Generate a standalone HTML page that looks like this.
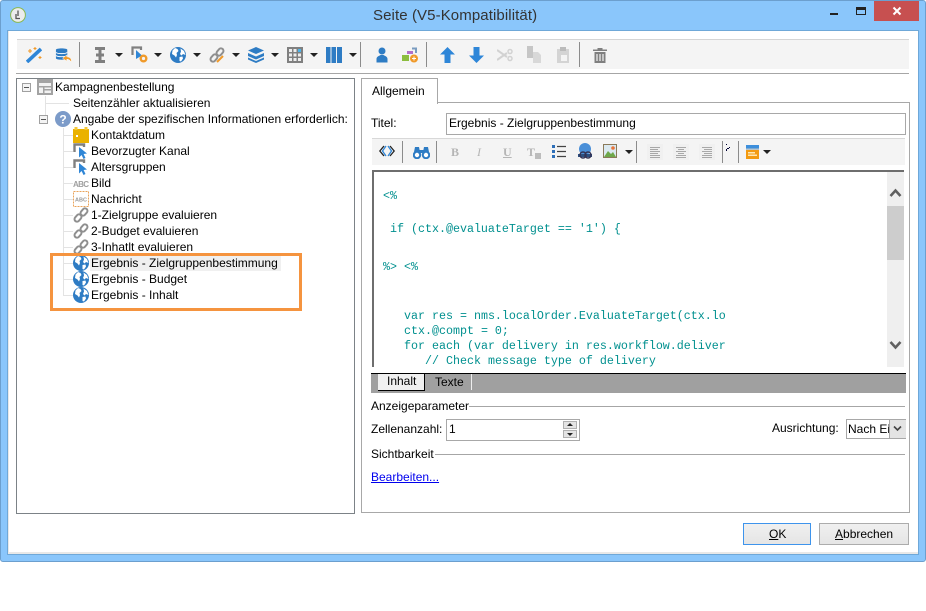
<!DOCTYPE html>
<html lang="de"><head><meta charset="utf-8"><title>Seite (V5-Kompatibilität)</title>
<style>
html,body{margin:0;padding:0;background:#fff}
body{width:926px;height:611px;position:relative;overflow:hidden;font-family:"Liberation Sans",sans-serif;font-size:12px;color:#000}
div,svg,span.a{position:absolute}
.t{position:absolute;white-space:nowrap;line-height:16px;height:16px}
.c{position:absolute;white-space:pre;font-family:"Liberation Mono",monospace;font-size:11.67px;line-height:14px;color:#00908f}
.sep{position:absolute;width:1px;background:#8c8c8c}
.arr{position:absolute;width:0;height:0;border-left:4px solid transparent;border-right:4px solid transparent;border-top:4px solid #222}
.tl{position:absolute;background:#e3e3e3}
.bx{position:absolute;width:7px;height:7px;border:1px solid #a0a0a0;background:#f4f4f4}
.bx:after{content:"";position:absolute;left:1px;top:3px;width:5px;height:1px;background:#555}
.al{position:absolute;width:16px;height:16px;background:#f0f0f0}
.al i{position:absolute;height:1px;background:#a8a8a8}
</style></head><body>
<svg width="0" height="0" style="position:absolute"><defs>
<symbol id="globe" viewBox="0 0 16 16"><circle cx="8" cy="8" r="8" fill="#2e7cc4"/><path d="M5 1 7.500 2 8.500 4 6.500 6 7 8 6 10.500 4.500 8.500 2 7 2.500 3.500ZM10.500 1.500 14 4 15.500 8 13 7 11.500 8.500 10 7 11 4.500ZM9.500 10 12.500 9.500 13 11.500 11 14.500 9.500 14Z" fill="#fff"/></symbol>
<symbol id="link" viewBox="0 0 16 16"><g fill="none" stroke="#8f8f8f" stroke-width="2"><rect x="8.500" y="1" width="5" height="8" rx="2.500" transform="rotate(40 11 5)"/><rect x="2.500" y="7" width="5" height="8" rx="2.500" transform="rotate(40 5 11)"/></g></symbol>
<symbol id="cur" viewBox="0 0 16 16"><path d="M1.500 9V1.500H11V4" fill="none" stroke="#808080" stroke-width="2.400"/><path d="M6 4 14 10.500 10.600 11 12.500 15 10.500 16 8.600 12 6 14.500Z" fill="#2f86d6"/></symbol>
</defs></svg>

<!-- window frame -->
<div style="left:0;top:0;width:924px;height:560px;background:#8ac6fb;border:1px solid #6c9fce;border-radius:3px"></div>
<div style="left:8px;top:31px;width:909px;height:521px;background:#fff;border-left:1px solid #e8e8e8;border-bottom:2px solid #e8e8e8;outline:1px solid #6fa8d8"></div>
<!-- title bar -->
<svg style="left:10px;top:7px" width="16" height="16" viewBox="0 0 16 16"><circle cx="8" cy="8" r="7.400" fill="#ececec" stroke="#8ab850"/><path d="M8 3.500V9M6 7v4.500h4" fill="none" stroke="#555" stroke-width="1.300"/></svg>
<div class="t" style="left:373px;top:7px;font-size:15px;color:#333;line-height:18px;height:18px;letter-spacing:.1px">Seite (V5-Kompatibilität)</div>
<div style="left:830px;top:13px;width:8px;height:2px;background:#222"></div>
<div style="left:856px;top:7px;width:8px;height:4px;border:1px solid #222;border-top:3px solid #222"></div>
<div style="left:874px;top:1px;width:45px;height:20px;background:#c75050"></div>
<svg style="left:892px;top:6px" width="10" height="10" viewBox="0 0 10 10"><path d="M1.500 1.500 8.500 8.500M8.500 1.500 1.500 8.500" stroke="#fff" stroke-width="2"/></svg>

<!-- main toolbar -->
<div style="left:17px;top:39px;width:892px;height:29px;background:#f4f4f4;border-top:1px solid #d5d5d5"></div>
<div style="left:16px;top:73px;width:893px;height:1px;background:#a6a6a6"></div>
<div class="sep" style="left:79px;top:42px;height:25px"></div>
<div class="sep" style="left:360px;top:42px;height:25px"></div>
<div class="sep" style="left:426px;top:42px;height:25px"></div>
<div class="sep" style="left:579px;top:42px;height:25px"></div>
<svg style="left:26px;top:47px" width="16" height="16" viewBox="0 0 16 16"><path d="M1 15 15 2" stroke="#2e86d8" stroke-width="3.600"/><path d="M4 2v4M2 4h4M14 9v3M12.500 10.500h3M9 0v3M7.500 1.500h3" stroke="#f09a2a" stroke-width="1.100"/></svg>
<svg style="left:55px;top:47px" width="17" height="16" viewBox="0 0 18 16"><path d="M1 2.500C1 .5 13 .5 13 2.500V11.500C13 13.500 1 13.500 1 11.500Z" fill="#2e7cc4"/><path d="M1 5.300C3 7 11 7 13 5.300M1 8.500C3 10.200 11 10.200 13 8.500" stroke="#fff" fill="none"/><path d="M17.500 15.500C17.500 11.500 15.500 10 12.500 10V8L8 11.500 12.500 14.500V12.500C14.500 12.500 16 13.500 17.500 15.500Z" fill="#f09a2a" stroke="#fff" stroke-width=".5"/></svg>
<svg style="left:92px;top:47px" width="16" height="16" viewBox="0 0 16 16"><path d="M3 1.500H13M3 14.500H13M8 1.500V14.500M4 8H12" stroke="#7f7f7f" stroke-width="3" fill="none"/></svg>
<div class="arr" style="left:115px;top:53px"></div>
<svg style="left:131px;top:46px" width="17" height="17" viewBox="0 0 17 17"><path d="M1.500 9V1.500H10V4" fill="none" stroke="#808080" stroke-width="2.200"/><path d="M5 4 11 9.500 5 13Z" fill="#2f86d6"/><circle cx="12.500" cy="12.500" r="2.800" fill="none" stroke="#f09a2a" stroke-width="2.400"/></svg>
<div class="arr" style="left:154px;top:53px"></div>
<svg style="left:170px;top:47px" width="16" height="16"><use href="#globe"/></svg>
<div class="arr" style="left:193px;top:53px"></div>
<svg style="left:209px;top:47px" width="16" height="16"><use href="#link"/><path d="M8 15 14 9" stroke="#f09a2a" stroke-width="2"/></svg>
<div class="arr" style="left:232px;top:53px"></div>
<svg style="left:248px;top:47px" width="16" height="16" viewBox="0 0 16 16"><path d="M8 0 16 3.500 8 7 0 3.500Z" fill="#2e7cc4"/><path d="M0 6 8 9.500 16 6V9L8 12.500 0 9ZM0 10.500 8 14 16 10.500V12.500L8 16 0 12.500Z" fill="#2e7cc4"/></svg>
<div class="arr" style="left:271px;top:53px"></div>
<svg style="left:287px;top:47px" width="16" height="16" viewBox="0 0 16 16"><rect width="16" height="16" fill="#808080"/><path d="M2 2h3v3H2zM6.500 2h3v3h-3zM2 6.500h3v3H2zM6.500 6.500h3v3h-3zM11 6.500h3v3h-3zM2 11h3v3H2zM6.500 11h3v3h-3zM11 11h3v3h-3z" fill="#eee"/><path d="M11 2h3v3h-3z" fill="#4cb4ea"/></svg>
<div class="arr" style="left:310px;top:53px"></div>
<svg style="left:326px;top:47px" width="16" height="16" viewBox="0 0 16 16"><path d="M0 0h4.500v16H0zM5.500 0H10v16H5.500zM11 0h5v16h-5z" fill="#2e7cc4"/></svg>
<div class="arr" style="left:349px;top:53px"></div>
<svg style="left:375px;top:47px" width="14" height="16" viewBox="0 0 14 16"><circle cx="7" cy="4" r="3.500" fill="#2e7cc4"/><path d="M1.500 15.500V12C1.500 9.500 4 9 5.500 8H8.500C10 9 12.500 9.500 12.500 12V15.500Z" fill="#2e7cc4"/></svg>
<svg style="left:402px;top:46px" width="16" height="17" viewBox="0 0 16 17"><path d="M5 5h6v3H5z" fill="#b26fc9"/><path d="M10 2.500h4V7" fill="none" stroke="#7a9cc0" stroke-width="2"/><path d="M0 9h7v6H0z" fill="#8cbd3f"/><circle cx="12" cy="12.500" r="4" fill="#f09a2a"/><path d="M10 12.500h4M12 10.500v4" stroke="#fff"/></svg>
<svg style="left:440px;top:47px" width="15" height="16" viewBox="0 0 15 16"><path d="M7.500 0 15 7.500H10.500V16H4.500V7.500H0Z" fill="#2e86d8"/></svg>
<svg style="left:469px;top:47px" width="15" height="16" viewBox="0 0 15 16"><path d="M7.500 16 15 8.500H10.500V0H4.500V8.500H0Z" fill="#2e86d8"/></svg>
<svg style="left:497px;top:47px" width="16" height="16" viewBox="0 0 16 16"><path d="M0 3 10 10M0 13 10 6" stroke="#d2d2d2" stroke-width="2"/><circle cx="13" cy="4.500" r="2" fill="none" stroke="#d2d2d2" stroke-width="1.500"/><circle cx="13" cy="11.500" r="2" fill="none" stroke="#d2d2d2" stroke-width="1.500"/></svg>
<svg style="left:527px;top:46px" width="15" height="17" viewBox="0 0 15 17"><path d="M0 0h6v12H0z" fill="#c6c6c6"/><path d="M6 6h5l3 3v8H6z" fill="#d8d8d8"/></svg>
<svg style="left:556px;top:47px" width="14" height="16" viewBox="0 0 14 16"><path d="M1 2h12v14H1z" fill="#d4d4d4"/><path d="M4 0h6v4H4z" fill="#bbb"/><path d="M5 8h6v6H5z" fill="#f4f4f4"/></svg>
<svg style="left:593px;top:47px" width="14" height="16" viewBox="0 0 14 16"><path d="M0 2.500h14V4H0zM4.500 1h5v1.500h-5z" fill="#7f7f7f"/><path d="M1.500 5h11v11h-11z" fill="#7f7f7f"/><path d="M4 7v7M7 7v7M10 7v7" stroke="#f4f4f4" stroke-width="1.200"/></svg>

<!-- tree panel -->
<div style="left:16px;top:78px;width:337px;height:434px;border:1px solid #7c8287;background:#fff"></div>
<div class="tl" style="left:45px;top:96px;width:1px;height:23px"></div>
<div class="tl" style="left:45px;top:103px;width:24px;height:1px"></div>
<div class="tl" style="left:63px;top:128px;width:1px;height:168px"></div>
<div class="tl" style="left:63px;top:135px;width:10px;height:1px"></div>
<div class="tl" style="left:63px;top:151px;width:10px;height:1px"></div>
<div class="tl" style="left:63px;top:167px;width:10px;height:1px"></div>
<div class="tl" style="left:63px;top:183px;width:10px;height:1px"></div>
<div class="tl" style="left:63px;top:199px;width:10px;height:1px"></div>
<div class="tl" style="left:63px;top:215px;width:10px;height:1px"></div>
<div class="tl" style="left:63px;top:231px;width:10px;height:1px"></div>
<div class="tl" style="left:63px;top:247px;width:10px;height:1px"></div>
<div class="tl" style="left:63px;top:263px;width:10px;height:1px"></div>
<div class="tl" style="left:63px;top:279px;width:10px;height:1px"></div>
<div class="tl" style="left:63px;top:295px;width:10px;height:1px"></div>
<div class="bx" style="left:22px;top:83px"></div>
<div class="bx" style="left:39px;top:115px"></div>
<svg style="left:37px;top:79px" width="16" height="16" viewBox="0 0 16 16"><rect width="16" height="16" fill="#a3a3a3"/><path d="M2 4h12v3H2zM2 8.500h4V14H2zM7.500 8.500H14V10H7.500zM7.500 11.500H14V14H7.500z" fill="#f2f2f2"/></svg>
<svg style="left:55px;top:111px" width="16" height="16"><circle cx="8" cy="8" r="8" fill="#7c9bc9"/><text x="8" y="12.500" font-family="Liberation Sans" font-size="12" font-weight="bold" fill="#fff" text-anchor="middle">?</text></svg>
<svg style="left:73px;top:127px" width="16" height="16" viewBox="0 0 16 16"><path d="M0 2h16v14H0z" fill="#eab200"/><path d="M1.500 0h3v3h-3zM11.500 0h3v3h-3z" fill="#f5c93a"/><path d="M3 8h2v2H3z" fill="#fff"/></svg>
<svg style="left:73px;top:143px" width="16" height="16"><use href="#cur"/></svg>
<svg style="left:73px;top:159px" width="16" height="16"><use href="#cur"/></svg>
<svg style="left:73px;top:175px" width="17" height="16"><text x="0" y="12" font-family="Liberation Sans" font-size="8" font-weight="bold" fill="#a0a0a0" textLength="16">ABC</text></svg>
<svg style="left:73px;top:191px" width="16" height="16"><rect x=".5" y=".5" width="15" height="15" fill="#fff" stroke="#eaa35a" stroke-dasharray="2 1"/><text x="8" y="10.500" font-family="Liberation Sans" font-size="5.500" font-weight="bold" fill="#999" text-anchor="middle">ABC</text></svg>
<svg style="left:73px;top:207px" width="16" height="16"><use href="#link"/></svg>
<svg style="left:73px;top:223px" width="16" height="16"><use href="#link"/></svg>
<svg style="left:73px;top:239px" width="16" height="16"><use href="#link"/></svg>
<div style="left:90px;top:256px;width:191px;height:15px;background:#f0f0f0"></div>
<svg style="left:73px;top:255px" width="16" height="16"><use href="#globe"/></svg>
<svg style="left:73px;top:271px" width="16" height="16"><use href="#globe"/></svg>
<svg style="left:73px;top:287px" width="16" height="16"><use href="#globe"/></svg>
<span class="t" style="left:55px;top:79px">Kampagnenbestellung</span>
<span class="t" style="left:73px;top:95px">Seitenzähler aktualisieren</span>
<span class="t" style="left:73px;top:111px">Angabe der spezifischen Informationen erforderlich:</span>
<span class="t" style="left:91px;top:127px">Kontaktdatum</span>
<span class="t" style="left:91px;top:143px">Bevorzugter Kanal</span>
<span class="t" style="left:91px;top:159px">Altersgruppen</span>
<span class="t" style="left:91px;top:175px">Bild</span>
<span class="t" style="left:91px;top:191px">Nachricht</span>
<span class="t" style="left:91px;top:207px">1-Zielgruppe evaluieren</span>
<span class="t" style="left:91px;top:223px">2-Budget evaluieren</span>
<span class="t" style="left:91px;top:239px">3-Inhatlt evaluieren</span>
<span class="t" style="left:91px;top:255px">Ergebnis - Zielgruppenbestimmung</span>
<span class="t" style="left:91px;top:271px">Ergebnis - Budget</span>
<span class="t" style="left:91px;top:287px">Ergebnis - Inhalt</span>
<div style="left:50px;top:253px;width:246px;height:52px;border:3px solid #f5943f"></div>

<!-- right panel -->
<div style="left:361px;top:102px;width:547px;height:409px;border:1px solid #a8a8a8;background:#fff"></div>
<div style="left:361px;top:78px;width:75px;height:25px;border:1px solid #a8a8a8;border-bottom:0;background:#fff"></div>
<span class="t" style="left:372px;top:83px">Allgemein</span>
<span class="t" style="left:371px;top:115px">Titel:</span>
<div style="left:446px;top:113px;width:458px;height:20px;border:1px solid #a8a8a8;background:#fff"></div>
<span class="t" style="left:449px;top:115px">Ergebnis - Zielgruppenbestimmung</span>

<!-- editor toolbar -->
<div style="left:372px;top:138px;width:533px;height:26px;background:#f4f4f4;border-top:1px solid #d8d8d8"></div>
<div class="sep" style="left:402px;top:141px;height:22px"></div>
<div class="sep" style="left:436px;top:141px;height:22px"></div>
<div class="sep" style="left:636px;top:141px;height:22px"></div>
<div class="sep" style="left:722px;top:141px;height:22px"></div>
<div class="sep" style="left:738px;top:141px;height:22px"></div>
<svg style="left:379px;top:145px" width="16" height="12" viewBox="0 0 16 12"><path d="M5 1 .8 6 5 11M11 1 15.200 6 11 11" fill="none" stroke="#222" stroke-width="1.300"/><path d="M7 1 3.500 6 7 11M9 1 12.500 6 9 11" fill="none" stroke="#2e86d8" stroke-width="1.300"/></svg>
<svg style="left:413px;top:146px" width="17" height="13" viewBox="0 0 17 13"><circle cx="4" cy="9" r="3.200" fill="#fff" stroke="#2e7cc4" stroke-width="2"/><circle cx="13" cy="9" r="3.200" fill="#fff" stroke="#2e7cc4" stroke-width="2"/><path d="M2 1h4l1 5H1ZM11 1h4l1 5h-6ZM6 4h5v3H6Z" fill="#2e7cc4"/></svg>
<span class="t" style="left:451px;top:144px;font-family:'Liberation Serif',serif;font-weight:bold;color:#b5b5b5;font-size:12px">B</span>
<span class="t" style="left:477px;top:144px;font-family:'Liberation Serif',serif;font-style:italic;color:#b5b5b5;font-size:12px">I</span>
<span class="t" style="left:503px;top:144px;font-family:'Liberation Serif',serif;font-weight:bold;text-decoration:underline;color:#b5b5b5;font-size:12px">U</span>
<span class="t" style="left:527px;top:144px;font-family:'Liberation Serif',serif;font-weight:bold;color:#b5b5b5;font-size:12px">T</span>
<div style="left:535px;top:153px;width:6px;height:6px;background:#bcbcbc"></div>
<svg style="left:552px;top:145px" width="14" height="13" viewBox="0 0 14 13"><path d="M0 0h3v3H0zM0 5h3v3H0zM0 10h3v3H0z" fill="#2e6fb8"/><path d="M5 1.500h9M5 6.500h9M5 11.500h9" stroke="#444" stroke-width="1.200"/></svg>
<svg style="left:577px;top:143px" width="16" height="16" viewBox="0 0 16 16"><circle cx="8" cy="6" r="6" fill="#4a8fd8"/><path d="M1 11h14v3H1z" fill="#2c4f80"/><circle cx="6" cy="12" r="3" fill="none" stroke="#335" stroke-width="1.500"/><circle cx="11" cy="12" r="3" fill="none" stroke="#335" stroke-width="1.500"/></svg>
<svg style="left:603px;top:144px" width="14" height="14" viewBox="0 0 14 14"><rect x=".5" y=".5" width="13" height="13" fill="#dbe9f0" stroke="#8a7a5a"/><path d="M1 13 5 7 8 10 10 8 13 13Z" fill="#6fa84a"/><circle cx="10" cy="4" r="1.800" fill="#e8743a"/></svg>
<div class="arr" style="left:625px;top:150px"></div>
<div class="al" style="left:647px;top:144px"><i style="left:3px;top:3px;width:10px"></i><i style="left:3px;top:5px;width:8px"></i><i style="left:3px;top:7px;width:10px"></i><i style="left:3px;top:9px;width:8px"></i><i style="left:3px;top:11px;width:10px"></i><i style="left:3px;top:13px;width:10px"></i></div>
<div class="al" style="left:673px;top:144px"><i style="left:3px;top:3px;width:10px"></i><i style="left:5px;top:5px;width:6px"></i><i style="left:3px;top:7px;width:10px"></i><i style="left:5px;top:9px;width:6px"></i><i style="left:3px;top:11px;width:10px"></i><i style="left:3px;top:13px;width:10px"></i></div>
<div class="al" style="left:699px;top:144px"><i style="left:3px;top:3px;width:10px"></i><i style="left:5px;top:5px;width:8px"></i><i style="left:3px;top:7px;width:10px"></i><i style="left:5px;top:9px;width:8px"></i><i style="left:3px;top:11px;width:10px"></i><i style="left:3px;top:13px;width:10px"></i></div>
<svg style="left:725px;top:144px" width="6" height="8"><path d="M1 0h1v1H1zM4 3h1v1H4zM2 4h2v1H2zM1 5h1v2H1z" fill="#003"/></svg>
<svg style="left:746px;top:145px" width="13" height="14" viewBox="0 0 13 14"><path d="M0 0h13v3.500H0z" fill="#3d8fdc"/><path d="M0 3.500h13V5H0z" fill="#b8c4cc"/><path d="M0 5h13v9H0z" fill="#f39a10"/><path d="M2 7h7v1.500H2zM2 9.500h9V11H2z" fill="#ffe6b0"/></svg>
<div class="arr" style="left:763px;top:150px"></div>

<!-- editor -->
<div style="left:372px;top:170px;width:532px;height:197px;border-top:2px solid #6e6e6e;border-left:2px solid #6e6e6e;box-sizing:border-box;background:#fff;overflow:hidden"></div>
<div class="c" style="left:383px;top:189px">&lt;%</div>
<div class="c" style="left:390px;top:222px">if (ctx.@evaluateTarget == '1') {</div>
<div class="c" style="left:383px;top:260px">%&gt; &lt;%</div>
<div class="c" style="left:404px;top:309px">var res = nms.localOrder.EvaluateTarget(ctx.lo</div>
<div class="c" style="left:404px;top:324px">ctx.@compt = 0;</div>
<div class="c" style="left:404px;top:339px">for each (var delivery in res.workflow.deliver</div>
<div class="c" style="left:425px;top:354px">// Check message type of delivery</div>
<div style="left:887px;top:172px;width:17px;height:195px;background:#efefef"></div>
<div style="left:887px;top:206px;width:17px;height:54px;background:#cdcdcd"></div>
<svg style="left:889px;top:188px" width="13" height="10"><path d="M1.500 8 6.500 2.500 11.500 8" fill="none" stroke="#606060" stroke-width="2.600"/></svg>
<svg style="left:889px;top:340px" width="13" height="10"><path d="M1.500 2 6.500 7.500 11.500 2" fill="none" stroke="#606060" stroke-width="2.600"/></svg>

<!-- inner tabs -->
<div style="left:371px;top:373px;width:535px;height:20px;background:#a0a0a0;border-top:1px solid #000;box-sizing:border-box"></div>
<div style="left:378px;top:374px;width:46px;height:16px;background:#f0f0f0;border-bottom:1px solid #000;border-right:1px solid #000"></div>
<div style="left:425px;top:374px;width:46px;height:16px;background:#a0a0a0;border-right:1px solid #eee"></div>
<span class="t" style="left:387px;top:373px">Inhalt</span>
<span class="t" style="left:435px;top:374px">Texte</span>

<!-- form -->
<span class="t" style="left:371px;top:398px">Anzeigeparameter</span>
<div style="left:469px;top:406px;width:436px;height:1px;background:#a6a6a6"></div>
<span class="t" style="left:371px;top:421px">Zellenanzahl:</span>
<div style="left:446px;top:419px;width:132px;height:20px;border:1px solid #a8a8a8;background:#fff"></div>
<span class="t" style="left:449px;top:421px">1</span>
<div style="left:563px;top:421px;width:14px;height:8px;background:#e4e4e4;border:1px solid #b0b0b0;box-sizing:border-box"></div>
<div style="left:563px;top:430px;width:14px;height:8px;background:#e4e4e4;border:1px solid #b0b0b0;box-sizing:border-box"></div>
<div style="left:567px;top:423px;width:0;height:0;border-left:3px solid transparent;border-right:3px solid transparent;border-bottom:3px solid #222"></div>
<div style="left:567px;top:433px;width:0;height:0;border-left:3px solid transparent;border-right:3px solid transparent;border-top:3px solid #222"></div>
<span class="t" style="left:772px;top:420px">Ausrichtung:</span>
<div style="left:846px;top:419px;width:58px;height:18px;border:1px solid #a8a8a8;background:#fff;overflow:hidden"><span class="t" style="left:1px;top:1px">Nach Einhalt</span></div>
<div style="left:889px;top:420px;width:16px;height:18px;background:#e4e4e4;border-left:1px solid #a8a8a8"></div>
<svg style="left:893px;top:425px" width="9" height="7"><path d="M1 1.500 4.500 5 8 1.500" fill="none" stroke="#444" stroke-width="1.600"/></svg>
<span class="t" style="left:371px;top:446px">Sichtbarkeit</span>
<div style="left:435px;top:454px;width:470px;height:1px;background:#a6a6a6"></div>
<span class="t" style="left:371px;top:469px;color:#00e;text-decoration:underline">Bearbeiten...</span>

<!-- buttons -->
<div style="left:743px;top:523px;width:66px;height:20px;border:1px solid #3e94ec;background:linear-gradient(#f0f0f0,#e5e5e5)"></div>
<div class="t" style="left:769px;top:526px"><u>O</u>K</div>
<div style="left:819px;top:523px;width:88px;height:20px;border:1px solid #acacac;background:linear-gradient(#f0f0f0,#e5e5e5)"></div>
<div class="t" style="left:835px;top:526px"><u>A</u>bbrechen</div>
</body></html>
